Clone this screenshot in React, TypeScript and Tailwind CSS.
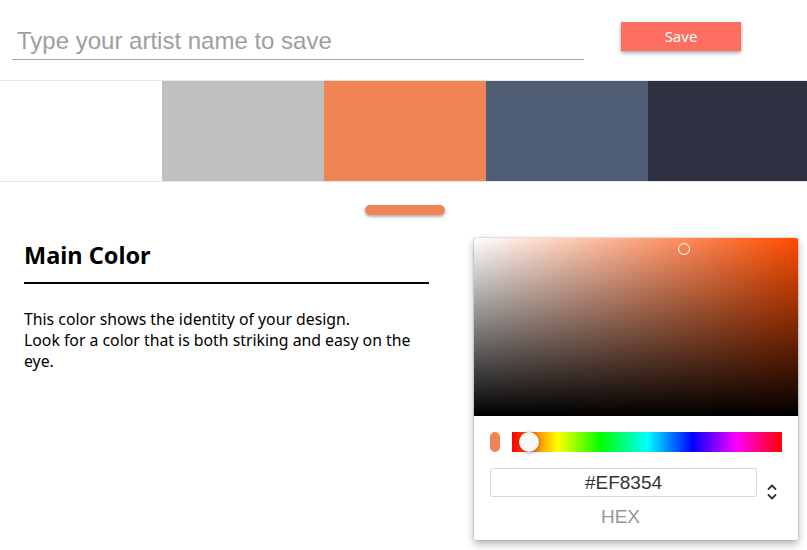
import { useState } from 'react';

const palette = ['#ffffff', '#bfc1bf', '#f08455', '#4f5d75', '#2d3142'];

export default function App() {
  const [name, setName] = useState('');
  const [active] = useState(2);

  return (
    <div className="w-[807px] h-[550px] bg-white overflow-hidden font-['Noto_Sans',sans-serif]">
      {/* Header */}
      <div className="flex items-start h-[80px] pl-[12px]">
        <input
          value={name}
          onChange={(e) => setName(e.target.value)}
          placeholder="Type your artist name to save"
          className="mt-[22px] w-[572px] h-[38px] pl-[5px] border-b border-[#a8a8a8] outline-none text-[24px] text-[#333] placeholder:text-[#9e9e9e] font-['Liberation_Sans',Arial,sans-serif]"
        />
        <button className="ml-[37px] mt-[22px] w-[120px] h-[29px] bg-[#ff6f61] text-white text-[15px] shadow-[0_2px_4px_rgba(0,0,0,0.35)]">
          Save
        </button>
      </div>

      {/* Palette */}
      <div className="flex h-[102px] border-y border-[#e6e6e6]">
        {palette.map((c, i) => (
          <div key={c} className={i === 4 ? 'flex-1' : 'w-[162px]'} style={{ backgroundColor: c }} />
        ))}
      </div>

      {/* Indicator */}
      <div className="flex h-[56px]">
        {palette.map((c, i) => (
          <div key={c} className={`${i === 4 ? 'flex-1' : 'w-[162px]'} flex justify-center pt-[23px]`}>
            {i === active && (
              <div className="w-[80px] h-[10px] rounded-full bg-[#f08455] shadow-[0_2px_3px_rgba(0,0,0,0.3)]" />
            )}
          </div>
        ))}
      </div>

      {/* Content */}
      <div className="flex pl-[24px] gap-[45px]">
        <div className="w-[405px]">
          <h2 className="text-[23.5px] font-bold text-black leading-[30px] pt-[2px] pb-[12px] border-b-2 border-black">Main Color</h2>
          <p className="mt-[25px] text-[15.8px] leading-[21px] text-black">
            This color shows the identity of your design.
            <br />
            Look for a color that is both striking and easy on the eye.
          </p>
        </div>

        {/* Picker */}
        <div className="w-[324px] h-[302px] bg-white rounded-[2px] shadow-[0_0_2px_rgba(0,0,0,0.3),0_4px_8px_rgba(0,0,0,0.3)] overflow-hidden">
          <div className="relative h-[178px] bg-[#ff4d00]">
            <div className="absolute inset-0 bg-[linear-gradient(to_right,#fff,rgba(255,255,255,0))]" />
            <div className="absolute inset-0 bg-[linear-gradient(to_top,#000,rgba(0,0,0,0))]" />
            <div className="absolute left-[204px] top-[5px] w-[12px] h-[12px] rounded-full border border-white" />
          </div>
          <div className="px-[16px] pt-[16px]">
            <div className="flex items-center gap-[12px]">
              <div className="w-[10px] h-[20px] rounded-full bg-[#ef8354]" />
              <div className="relative flex-1 h-[20px] bg-[linear-gradient(to_right,#f00_0%,#ff0_17%,#0f0_33%,#0ff_50%,#00f_67%,#f0f_83%,#f00_100%)]">
                <div className="absolute left-[7px] top-[0px] w-[20px] h-[20px] rounded-full bg-[#f8f8f8] shadow-[0_1px_4px_rgba(0,0,0,0.37)]" />
              </div>
            </div>
            <div className="flex mt-[16px]">
              <div className="w-[267px] flex flex-col items-center">
                <input
                  readOnly
                  value="#EF8354"
                  className="w-full h-[29px] border border-[#dadada] rounded-[2px] text-center text-[19px] text-[#333] outline-none font-['Liberation_Sans',Arial,sans-serif]"
                />
                <div className="mt-[9px] pr-[6px] text-[19px] leading-[22px] text-[#969696] font-['Liberation_Sans',Arial,sans-serif]">HEX</div>
              </div>
              <div className="flex-1 flex justify-center pt-[16px] pl-[4px]">
                <svg width="10" height="16" viewBox="0 0 10 16" fill="none" stroke="#333" strokeWidth="1.8" strokeLinecap="round" strokeLinejoin="round">
                  <path d="M1.5 5 L5 1.5 L8.5 5" />
                  <path d="M1.5 11 L5 14.5 L8.5 11" />
                </svg>
              </div>
            </div>
          </div>
        </div>
      </div>
    </div>
  );
}
